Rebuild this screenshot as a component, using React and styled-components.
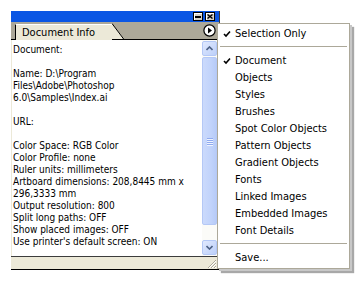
import React from "react";
import styled, { createGlobalStyle } from "styled-components";

const GlobalStyle = createGlobalStyle`
  html, body {
    margin: 0;
    padding: 0;
    background: #fff;
  }
  body {
    font-family: "DejaVu Sans Condensed", "DejaVu Sans", "Liberation Sans", sans-serif;
    font-stretch: condensed;
    font-size: 11px;
    color: #000;
  }
`;

const Stage = styled.div`
  position: relative;
  width: 359px;
  height: 285px;
  overflow: hidden;
  padding: 11px 0 0 11px;
  box-sizing: border-box;
`;

const Panel = styled.div`
  width: 209px;
  display: flex;
  flex-direction: column;
  border-right: 1px solid #3c3c3c;
  box-sizing: border-box;
`;

const TitleBar = styled.div`
  height: 11px;
  background: #0a56e4;
  display: flex;
  justify-content: flex-end;
  align-items: center;
  gap: 2px;
  padding-right: 4px;
`;

const WinButton = styled.div`
  width: 10px;
  height: 9px;
  box-sizing: border-box;
  background: #d4d0c8;
  border: 1px solid #000;
  box-shadow: inset 1px 1px 0 #fff;
  display: flex;
  align-items: center;
  justify-content: center;
`;

const TabRow = styled.div`
  height: 17px;
  background: #aca899;
  border-bottom: 1px solid #000;
  display: flex;
  align-items: flex-end;
  padding-left: 4px;
`;

const Tab = styled.div`
  display: flex;
  align-items: flex-end;
  margin-bottom: -1px;
`;

const TabFace = styled.div`
  height: 16px;
  box-sizing: border-box;
  background: #ece9d8;
  border-left: 1px solid #000;
  border-top: 1px solid #fff;
  padding: 0 17px 0 6px;
  line-height: 15px;
  white-space: nowrap;
`;

const RoundButton = styled.div`
  margin-left: auto;
  margin-right: 3px;
  align-self: center;
  display: flex;
`;

const Body = styled.div`
  height: 216px;
  display: flex;
  background: #fff;
  padding-right: 2px;
`;

const Content = styled.div`
  flex: 1;
  border-left: 1px solid #ece9d8;
  padding: 4px 0 0 1px;
  font-size: 10px;
  line-height: 12px;
  white-space: nowrap;
  overflow: hidden;
`;

const Line = styled.div`
  height: 12px;
`;

const Scrollbar = styled.div`
  width: 15px;
  display: flex;
  flex-direction: column;
  background: #fbfbf8;
  padding: 1px 0;
  box-sizing: border-box;
`;

const ScrollButton = styled.div`
  height: 15px;
  box-sizing: border-box;
  border: 1px solid #b4c8f6;
  border-radius: 2px;
  background: linear-gradient(135deg, #e0e9fe, #bccff9);
  display: flex;
  align-items: center;
  justify-content: center;
`;

const Thumb = styled.div`
  height: ${(p) => p.size}px;
  margin-top: 1px;
  box-sizing: border-box;
  border: 1px solid #b4c8f6;
  border-radius: 2px;
  background: linear-gradient(90deg, #cbdafc, #c1d3fb 60%, #b7cbf8);
  display: flex;
  flex-direction: column;
  align-items: center;
  justify-content: center;
  gap: 1px;
`;

const Grip = styled.div`
  width: 6px;
  height: 1px;
  background: #8faaf0;
  box-shadow: 0 1px 0 #eef3fe;
`;

const Track = styled.div`
  flex: 1;
`;

const StatusBar = styled.div`
  height: 12px;
  background: #ece9d8;
  border-top: 1px solid #3c3c3c;
  border-bottom: 1px solid #000;
  display: flex;
  justify-content: flex-end;
  align-items: flex-end;
  padding-right: 2px;
`;

const Menu = styled.div`
  position: absolute;
  left: 217px;
  top: 23px;
  width: 133px;
  box-sizing: border-box;
  background: #fff;
  border: 1px solid #aca899;
  padding: 1px 0 2px;
  box-shadow: 2px 2px 0 #c8c8c8, 4px 4px 1px #a8a8a8;
`;

const MenuItem = styled.div`
  height: 17px;
  display: flex;
  align-items: center;
  white-space: nowrap;
`;

const CheckSlot = styled.div`
  width: 17px;
  padding-left: 5px;
  box-sizing: border-box;
  display: flex;
  align-items: center;
`;

const Separator = styled.div`
  height: 1px;
  background: #aca899;
  margin: 4px 2px 5px 2px;
`;

const Check = () => (
  <svg width="8" height="8" viewBox="0 0 8 8">
    <polyline points="1,4 3,6 7,1.5" fill="none" stroke="#000" strokeWidth="1.6" />
  </svg>
);

const infoLines = [
  "Document:",
  "",
  "Name: D:\\Program",
  "Files\\Adobe\\Photoshop",
  "6.0\\Samples\\Index.ai",
  "",
  "URL:",
  "",
  "Color Space: RGB Color",
  "Color Profile: none",
  "Ruler units: millimeters",
  "Artboard dimensions: 208,8445 mm x",
  "296,3333 mm",
  "Output resolution: 800",
  "Split long paths: OFF",
  "Show placed images: OFF",
  "Use printer's default screen: ON",
];

const menuItems = [
  "Document",
  "Objects",
  "Styles",
  "Brushes",
  "Spot Color Objects",
  "Pattern Objects",
  "Gradient Objects",
  "Fonts",
  "Linked Images",
  "Embedded Images",
  "Font Details",
];

function App() {
  return (
    <Stage>
      <GlobalStyle />
      <Panel>
        <TitleBar>
          <WinButton>
            <svg width="6" height="5" viewBox="0 0 6 5">
              <rect x="0" y="2" width="6" height="2" fill="#000" />
            </svg>
          </WinButton>
          <WinButton>
            <svg width="6" height="5" viewBox="0 0 6 5">
              <path d="M0.5 0.5 L5.5 4.5 M5.5 0.5 L0.5 4.5" stroke="#000" strokeWidth="1.4" />
            </svg>
          </WinButton>
        </TitleBar>
        <TabRow>
          <Tab>
            <TabFace>Document Info</TabFace>
            <svg width="13" height="17" viewBox="0 0 13 17">
              <polygon points="0,0.5 12,16 0,16" fill="#ece9d8" />
              <line x1="0" y1="0.5" x2="12" y2="16.5" stroke="#000" strokeWidth="1" />
            </svg>
          </Tab>
          <RoundButton>
            <svg width="13" height="13" viewBox="0 0 13 13">
              <circle cx="6.5" cy="6.5" r="5.6" fill="#fff" stroke="#000" strokeWidth="1.2" />
              <polygon points="5,3.5 9,6.5 5,9.5" fill="#000" />
            </svg>
          </RoundButton>
        </TabRow>
        <Body>
          <Content>
            {infoLines.map((text, i) => (
              <Line key={i}>{text}</Line>
            ))}
          </Content>
          <Scrollbar>
            <ScrollButton>
              <svg width="7" height="5" viewBox="0 0 7 5">
                <polyline points="0.5,4 3.5,1 6.5,4" fill="none" stroke="#4d6185" strokeWidth="1.6" />
              </svg>
            </ScrollButton>
            <Thumb size={168}>
              <Grip />
              <Grip />
              <Grip />
              <Grip />
            </Thumb>
            <Track />
            <ScrollButton>
              <svg width="7" height="5" viewBox="0 0 7 5">
                <polyline points="0.5,1 3.5,4 6.5,1" fill="none" stroke="#4d6185" strokeWidth="1.6" />
              </svg>
            </ScrollButton>
          </Scrollbar>
        </Body>
        <StatusBar>
          <svg width="11" height="11" viewBox="0 0 11 11">
            <path d="M10 2 L2 10 M10 5 L5 10 M10 8 L8 10" stroke="#aca899" strokeWidth="1" />
            <path d="M10 3 L3 10 M10 6 L6 10 M10 9 L9 10" stroke="#fff" strokeWidth="1" />
          </svg>
        </StatusBar>
      </Panel>
      <Menu>
        <MenuItem>
          <CheckSlot>
            <Check />
          </CheckSlot>
          Selection Only
        </MenuItem>
        <Separator />
        {menuItems.map((label, i) => (
          <MenuItem key={label}>
            <CheckSlot>{i === 0 && <Check />}</CheckSlot>
            {label}
          </MenuItem>
        ))}
        <Separator />
        <MenuItem>
          <CheckSlot />
          Save...
        </MenuItem>
      </Menu>
    </Stage>
  );
}

export default App;
